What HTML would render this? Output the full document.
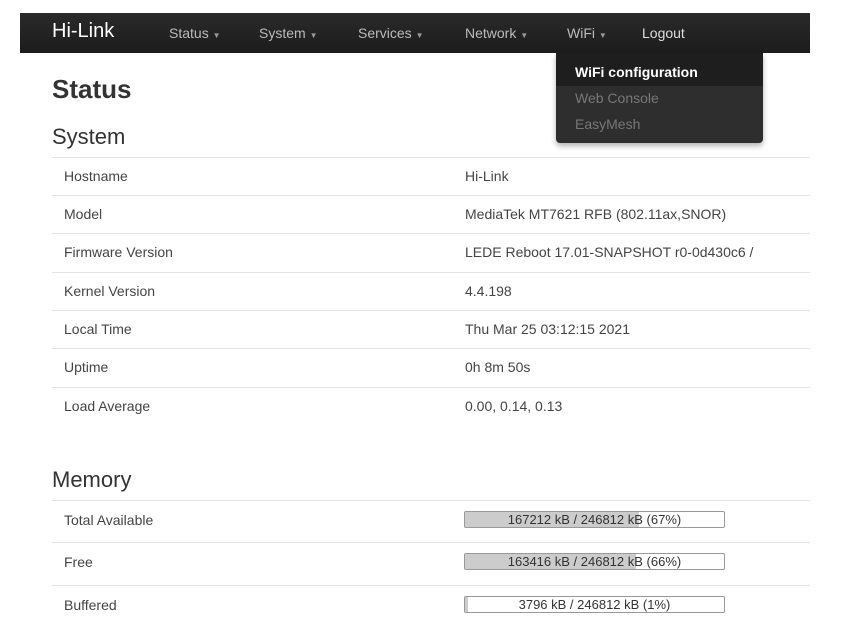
<!DOCTYPE html>
<html><head><style>
body{margin:0;width:841px;height:638px;background:#fff;font-family:"Liberation Sans",sans-serif;position:relative;overflow:hidden;color:#333}
.nav{position:absolute;left:20px;top:13px;width:790px;height:40px;background:linear-gradient(#2a2a2a,#1c1c1c)}
.a{position:absolute;top:0;line-height:40px;font-size:14px;color:#bbb}
.brand{font-size:20px;color:#fff;left:32px;top:-2px}
.c{font-size:8px;color:#999}
.dd{position:absolute;left:556px;top:53px;width:207px;height:90px;background:#2e2e2e;border-radius:0 0 4px 4px;box-shadow:0 3px 6px rgba(0,0,0,.3)}
.dd div{position:absolute;left:19px;font-size:14px;color:#777}
.t{position:absolute;left:52px;font-size:17px}
.row{position:absolute;left:52px;width:758px;border-top:1px solid #e3e3e3;font-size:14px;color:#444}
.row span{position:absolute;left:12px}
.row b{font-weight:normal;position:absolute;left:413px;white-space:nowrap}
.bar{position:absolute;left:464px;width:259px;height:15px;border:1px solid #999;border-radius:2px;font-size:13px;text-align:center;line-height:15px;color:#333;background:#fff;overflow:hidden}
.bar i{position:absolute;left:0;top:0;bottom:0;background:#ccc}
.bar em{position:relative;font-style:normal}
</style></head><body>
<div class="nav">
<div class="a brand">Hi-Link</div>
<div class="a" style="left:149px">Status <span class="c">▼</span></div>
<div class="a" style="left:239px">System <span class="c">▼</span></div>
<div class="a" style="left:338px">Services <span class="c">▼</span></div>
<div class="a" style="left:445px">Network <span class="c">▼</span></div>
<div class="a" style="left:547px">WiFi <span class="c">▼</span></div>
<div class="a" style="left:622px;color:#ddd">Logout</div>
</div>
<div class="dd">
<div style="top:0;left:0;width:207px;height:33px;background:#1e1e1e"></div>
<div style="top:11px;color:#fff;font-weight:bold">WiFi configuration</div>
<div style="top:37px">Web Console</div>
<div style="top:63px">EasyMesh</div>
</div>
<div class="t" style="top:74px;font-size:26px;font-weight:bold">Status</div>
<div class="t" style="top:124px;font-size:22px">System</div>
<div class="row" style="top:157px;height:38px"><span style="top:10px">Hostname</span><b style="top:10px">Hi-Link</b></div>
<div class="row" style="top:195px;height:38px"><span style="top:10px">Model</span><b style="top:10px">MediaTek MT7621 RFB (802.11ax,SNOR)</b></div>
<div class="row" style="top:233px;height:38px"><span style="top:10px">Firmware Version</span><b style="top:10px">LEDE Reboot 17.01-SNAPSHOT r0-0d430c6 /</b></div>
<div class="row" style="top:272px;height:38px"><span style="top:10px">Kernel Version</span><b style="top:10px">4.4.198</b></div>
<div class="row" style="top:310px;height:38px"><span style="top:10px">Local Time</span><b style="top:10px">Thu Mar 25 03:12:15 2021</b></div>
<div class="row" style="top:348px;height:38px"><span style="top:10px">Uptime</span><b style="top:10px">0h 8m 50s</b></div>
<div class="row" style="top:387px;height:38px"><span style="top:10px">Load Average</span><b style="top:10px">0.00, 0.14, 0.13</b></div>
<div class="t" style="top:467px;font-size:22px">Memory</div>
<div class="row" style="top:500px"><span style="top:11px">Total Available</span></div>
<div class="row" style="top:542px"><span style="top:11px">Free</span></div>
<div class="row" style="top:585px"><span style="top:11px">Buffered</span></div>
<div class="bar" style="top:511px"><i style="width:67%"></i><em>167212 kB / 246812 kB (67%)</em></div>
<div class="bar" style="top:553px"><i style="width:66%"></i><em>163416 kB / 246812 kB (66%)</em></div>
<div class="bar" style="top:596px"><i style="width:1%"></i><em>3796 kB / 246812 kB (1%)</em></div>
</body></html>
